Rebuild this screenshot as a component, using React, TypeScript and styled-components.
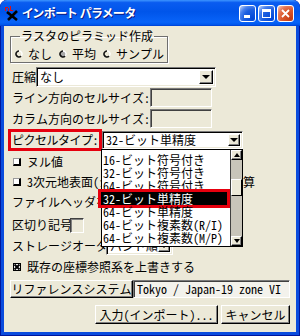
import React from "react";
import styled, { createGlobalStyle, css } from "styled-components";

const UI_FONT = `"Noto Sans Mono CJK JP", "Noto Sans CJK JP", sans-serif`;
const FACE = "#ECE9D8";

const GlobalStyle = createGlobalStyle`
  html, body {
    margin: 0;
    padding: 0;
    background: #fff;
  }
  body {
    font-family: ${UI_FONT};
  }
`;

const Window = styled.div`
  width: 300px;
  height: 336px;
  box-sizing: border-box;
  display: flex;
  flex-direction: column;
  border-radius: 7px 7px 0 0;
  background: #0A4BDD;
  box-shadow: inset 1px 0 #00169C, inset -1px 0 #00169C, inset 0 -1px #00169C;
  overflow: hidden;
`;

const TitleBar = styled.div`
  flex: 0 0 26px;
  display: flex;
  align-items: center;
  padding: 0 6px 0 4px;
  background: linear-gradient(
    to bottom,
    #3D95FF 0%,
    #0A5CF0 10%,
    #0055EA 45%,
    #0863F8 85%,
    #0058EE 94%,
    #003DD0 100%
  );
  border-radius: 7px 7px 0 0;
`;

const TitleText = styled.div`
  flex: 1;
  margin-left: 2px;
  color: #fff;
  font: bold 12px/14px "Noto Sans CJK JP", sans-serif;
  font-feature-settings: "palt";
  text-shadow: 1px 1px #0A1883;
  white-space: nowrap;
`;

const CaptionButtons = styled.div`
  display: flex;
  gap: 2px;
  margin-top: 1px;
`;

const CaptionButton = styled.div<{ $close?: boolean }>`
  width: 17px;
  height: 17px;
  box-sizing: border-box;
  border: 1px solid #fff;
  border-radius: 3px;
  display: flex;
  align-items: center;
  justify-content: center;
  background: ${(p) =>
    p.$close
      ? "radial-gradient(circle at 85% 85%, #C43A12 0%, #DC5A2E 50%, #E4795A 72%, #F4B9A4 92%, #fff 100%)"
      : "radial-gradient(circle at 85% 85%, #0046D8 0%, #1C5FE0 50%, #4A82EE 72%, #A9C2F4 92%, #fff 100%)"};
`;

const Body = styled.div`
  flex: 1;
  margin: 0 4px 4px;
  padding: 4px 6px 0 6px;
  background: ${FACE};
  display: flex;
  flex-direction: column;
  font: 12px/1 ${UI_FONT};
  color: #000;
  position: relative;
`;

const GroupBox = styled.fieldset`
  width: 158px;
  box-sizing: border-box;
  margin: 0;
  padding: 0 4px 1px 3px;
  min-width: 0;
  border: 1px solid #6F6F6F;
  box-shadow: 1px 1px 0 #fff, inset 1px 1px 0 #fff;
`;

const Legend = styled.legend`
  margin-left: 6px;
  padding: 0 1px;
  font-size: 12px;
  line-height: 12px;
  white-space: nowrap;
`;

const RadioRow = styled.div`
  display: flex;
  align-items: center;
  gap: 7px;
  height: 14px;
  margin-top: 5px;
  padding-left: 1px;
  white-space: nowrap;
`;

const RadioItem = styled.label`
  display: flex;
  align-items: center;
  gap: 5px;
`;

const Row = styled.div<{ $mt: number; $h?: number; $end?: boolean }>`
  display: flex;
  align-items: center;
  margin-top: ${(p) => p.$mt}px;
  height: ${(p) => p.$h ?? 18}px;
  white-space: nowrap;
  justify-content: ${(p) => (p.$end ? "flex-end" : "flex-start")};
  gap: ${(p) => (p.$end ? 3 : 0)}px;
`;

const Label = styled.span`
  padding-left: 2px;
`;

const HighlightLabel = styled.span`
  display: inline-block;
  width: 87px;
  height: 16px;
  line-height: 16px;
  margin-left: 1px;
  padding-left: 1px;
  letter-spacing: -0.5px;
  outline: 3px solid #E6000E;
`;

const Combo = styled.div<{ $w: number; $ml?: number }>`
  position: relative;
  width: ${(p) => p.$w}px;
  height: 100%;
  margin-left: ${(p) => p.$ml ?? 0}px;
  box-sizing: border-box;
  display: flex;
  align-items: center;
  background: #fff;
  border: 1px solid;
  border-color: #7A7A7A #fff #fff #7A7A7A;
  box-shadow: inset 1px 1px #000, inset -1px -1px ${FACE};
`;

const ComboText = styled.span`
  flex: 1;
  padding-left: 3px;
  line-height: 16px;
  overflow: hidden;
`;

const ArrowButton = styled.span<{ $size: number; $up?: boolean }>`
  width: ${(p) => p.$size}px;
  height: ${(p) => p.$size}px;
  margin-right: 2px;
  box-sizing: border-box;
  background: ${FACE};
  border: 1px solid;
  border-color: #fff #000 #000 #fff;
  box-shadow: inset -1px -1px #808080;
  display: flex;
  align-items: center;
  justify-content: center;
  flex: 0 0 auto;
  &::after {
    content: "";
    border-left: 4px solid transparent;
    border-right: 4px solid transparent;
    ${(p) =>
      p.$up
        ? css`border-bottom: 4px solid #000;`
        : css`border-top: 4px solid #000;`}
  }
`;

const Edit = styled.div<{ $w: number; $bg?: string }>`
  width: ${(p) => p.$w}px;
  height: 100%;
  box-sizing: border-box;
  display: flex;
  align-items: center;
  padding-left: 3px;
  background: ${(p) => p.$bg ?? FACE};
  border: 1px solid;
  border-color: #7A7A7A #fff #fff #7A7A7A;
  box-shadow: inset 1px 1px #404040;
`;

const FieldText = styled.span`
  font-family: "Noto Sans Mono CJK JP", "Liberation Mono", monospace;
`;

const CheckBox = styled.span`
  width: 8px;
  height: 8px;
  margin-left: 3px;
  margin-right: 6px;
  box-sizing: border-box;
  background: #fff;
  border: 1px solid #9A9A9A;
  border-right: 2px solid #000;
  border-bottom: 2px solid #000;
  flex: 0 0 auto;
`;

const DropList = styled.div`
  position: absolute;
  top: calc(100% + 1px);
  left: -2px;
  width: 142px;
  height: 98px;
  box-sizing: border-box;
  display: flex;
  background: #fff;
  border: 1px solid #000;
  z-index: 2;
`;

const ListItems = styled.div`
  flex: 1;
  display: flex;
  flex-direction: column;
  padding-top: 3px;
`;

const ListItem = styled.div<{ $selected?: boolean }>`
  height: 13px;
  line-height: 13px;
  padding-left: 1px;
  margin-right: 1px;
  ${(p) =>
    p.$selected &&
    css`
      margin-left: -1px;
      margin-right: 3px;
      padding-left: 2px;
      background: #000;
      color: #fff;
      outline: 3px solid #E6000E;
    `}
`;

const ScrollBar = styled.div`
  width: 12px;
  box-sizing: border-box;
  display: flex;
  flex-direction: column;
  align-items: stretch;
  background: #C8C5BA;
  border-left: 1px solid #404040;
`;

const ScrollTrack = styled.div`
  flex: 1;
  padding-top: 19px;
`;

const ScrollThumb = styled.div`
  height: 17px;
  box-sizing: border-box;
  background: ${FACE};
  border: 1px solid;
  border-color: #fff #000 #000 #fff;
`;

const ScrollArrow = styled(ArrowButton)`
  width: 100%;
  height: 10px;
  margin: 0;
  &::after {
    border-left-width: 3px;
    border-right-width: 3px;
  }
`;

const DelimiterBox = styled.span`
  width: 14px;
  height: 15px;
  box-sizing: border-box;
  margin-left: -2px;
  background: ${FACE};
  border: 1px solid;
  border-color: #404040 #fff #fff #404040;
  box-shadow: inset 1px 1px #808080;
`;

const PushButton = styled.button<{ $w: number }>`
  width: ${(p) => p.$w}px;
  height: 100%;
  box-sizing: border-box;
  margin: 0;
  padding: 0;
  font: 12px/1 ${UI_FONT};
  color: #000;
  background: ${FACE};
  border: 1px solid;
  border-color: #fff #000 #000 #fff;
  box-shadow: inset -1px -1px #808080;
  white-space: nowrap;
  flex: 0 0 auto;
`;

const AppIcon = () => (
  <svg width="16" height="16" viewBox="0 0 16 16">
    <path d="M1 2h1v4h-1zM2 2h2v1h-2zM4 3h1v3h-1zM6 1h1v5h-1zM7 5h2v1h-2z" fill="#E01010" />
    <path d="M3 7L13 15M13 6L4 15" stroke="#000" strokeWidth="2.6" />
  </svg>
);

const RadioMark = ({ on }: { on?: boolean }) => (
  <svg width="8" height="8" viewBox="0 0 8 8">
    <circle cx="4" cy="4" r="3" fill={on ? "#A9A9A9" : FACE} />
    <path d="M4 1A3 3 0 1 0 6.12 6.12" fill="none" stroke="#111" strokeWidth="1.6" />
    <path d="M6.12 6.12A3 3 0 0 0 4 1" fill="none" stroke="#fff" strokeWidth="1.4" />
  </svg>
);

const CheckedMark = () => (
  <svg width="8" height="8" viewBox="0 0 8 8" style={{ marginLeft: 3, marginRight: 6 }}>
    <rect x="0" y="0" width="8" height="8" fill="#fff" stroke="#000" strokeWidth="2" />
    <path d="M1.5 1.5L6.5 6.5M6.5 1.5L1.5 6.5" stroke="#000" strokeWidth="2" />
  </svg>
);

const pixelTypes = [
  "16-ビット符号付き",
  "32-ビット符号付き",
  "64-ビット符号付き",
  "32-ビット単精度",
  "64-ビット単精度",
  "64-ビット複素数(R/I)",
  "64-ビット複素数(M/P)",
];

export default function App() {
  return (
    <>
      <GlobalStyle />
      <Window>
        <TitleBar>
          <AppIcon />
          <TitleText>インポート パラメータ</TitleText>
          <CaptionButtons>
            <CaptionButton>
              <svg width="11" height="11" viewBox="0 0 11 11">
                <rect x="2" y="7" width="6" height="3" fill="#fff" />
              </svg>
            </CaptionButton>
            <CaptionButton>
              <svg width="11" height="11" viewBox="0 0 11 11">
                <rect x="1.5" y="1.5" width="8" height="8" fill="none" stroke="#fff" strokeWidth="1" />
                <rect x="1" y="1" width="9" height="3" fill="#fff" />
              </svg>
            </CaptionButton>
            <CaptionButton $close>
              <svg width="11" height="11" viewBox="0 0 11 11">
                <path d="M2 2L9 9M9 2L2 9" stroke="#fff" strokeWidth="1.8" />
              </svg>
            </CaptionButton>
          </CaptionButtons>
        </TitleBar>

        <Body>
          <GroupBox>
            <Legend>ラスタのピラミッド作成</Legend>
            <RadioRow>
              <RadioItem>
                <RadioMark />
                なし
              </RadioItem>
              <RadioItem>
                <RadioMark on />
                平均
              </RadioItem>
              <RadioItem>
                <RadioMark />
                サンプル
              </RadioItem>
            </RadioRow>
          </GroupBox>

          <Row $mt={4} $h={20}>
            <Label>圧縮</Label>
            <Combo $w={180}>
              <ComboText>なし</ComboText>
              <ArrowButton $size={14} />
            </Combo>
          </Row>

          <Row $mt={1} $h={19}>
            <Label>ライン方向のセルサイズ:</Label>
            <Edit $w={62} />
          </Row>

          <Row $mt={2} $h={19}>
            <Label>カラム方向のセルサイズ:</Label>
            <Edit $w={62} />
          </Row>

          <Row $mt={3} $h={18}>
            <HighlightLabel>ピクセルタイプ:</HighlightLabel>
            <Combo $w={141} $ml={3}>
              <ComboText>32-ビット単精度</ComboText>
              <ArrowButton $size={12} />
              <DropList>
                <ListItems>
                  {pixelTypes.map((t, i) => (
                    <ListItem key={t} $selected={i === 3}>
                      {t}
                    </ListItem>
                  ))}
                </ListItems>
                <ScrollBar>
                  <ScrollArrow $size={10} $up />
                  <ScrollTrack>
                    <ScrollThumb />
                  </ScrollTrack>
                  <ScrollArrow $size={10} />
                </ScrollBar>
              </DropList>
            </Combo>
          </Row>

          <Row $mt={4}>
            <CheckBox />
            ヌル値
          </Row>

          <Row $mt={2}>
            <CheckBox />
            3次元地表面(ジオイド高）から標高を計算
          </Row>

          <Row $mt={2}>
            <Label>ファイルヘッダを無視</Label>
          </Row>

          <Row $mt={5} $h={18}>
            <Label>区切り記号</Label>
            <DelimiterBox />
          </Row>

          <Row $mt={3} $h={18}>
            <Label>ストレージオーダ</Label>
            <Combo $w={67} $ml={-2}>
              <ComboText>バンド順</ComboText>
              <ArrowButton $size={12} />
            </Combo>
          </Row>

          <Row $mt={3}>
            <CheckedMark />
            既存の座標参照系を上書きする
          </Row>

          <Row $mt={4} $h={18}>
            <PushButton $w={123}>リファレンスシステム</PushButton>
            <Edit $w={157} $bg="#F3F2EC">
              <FieldText>Tokyo / Japan-19 zone VI</FieldText>
            </Edit>
          </Row>

          <Row $mt={7} $h={19} $end>
            <PushButton $w={123}>入力(インポート)...</PushButton>
            <PushButton $w={69}>キャンセル</PushButton>
          </Row>
        </Body>
      </Window>
    </>
  );
}
